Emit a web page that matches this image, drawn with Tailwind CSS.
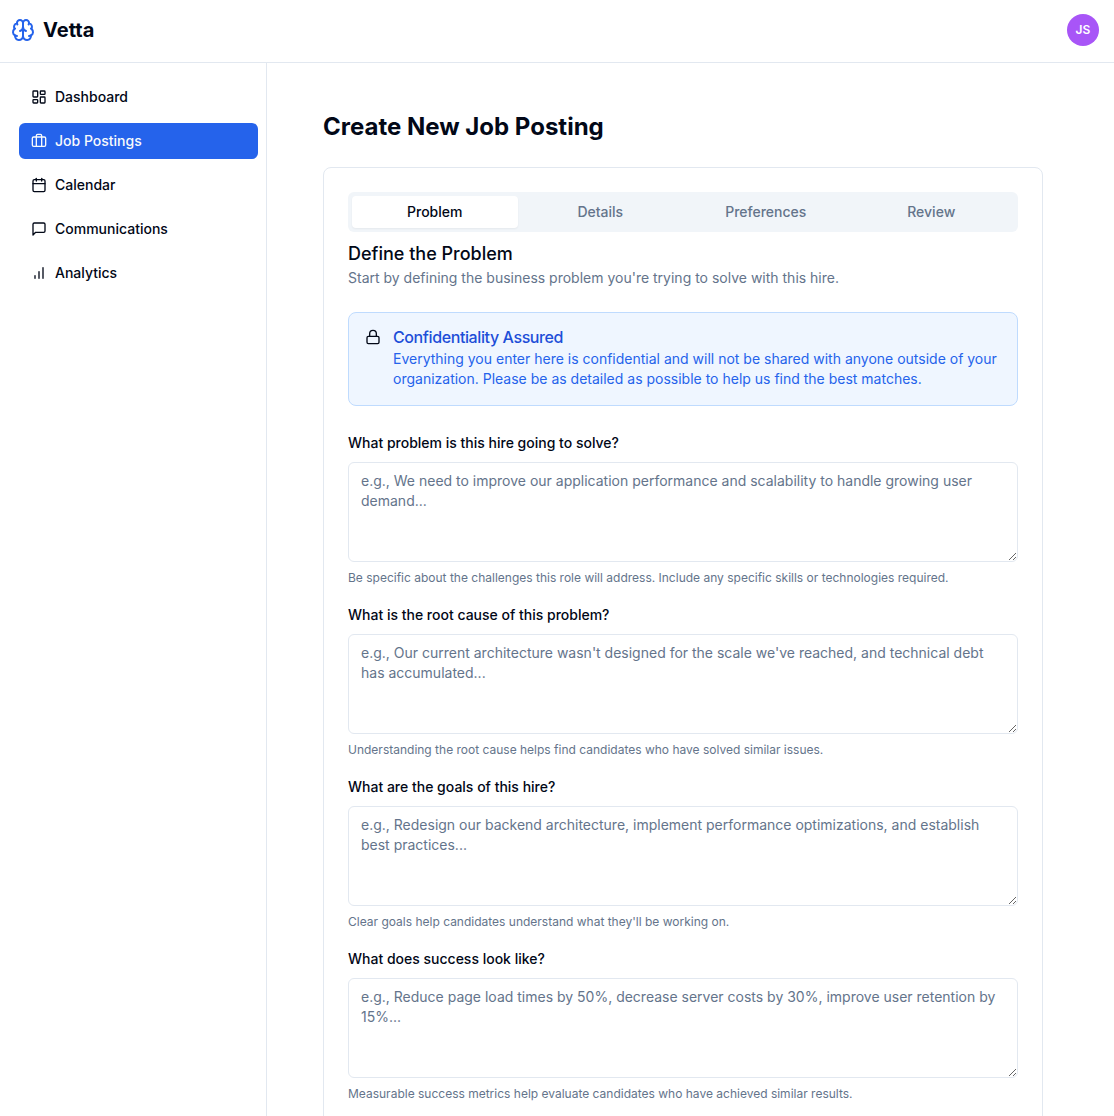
<!DOCTYPE html>
<html lang="en">
<head>
    <meta charset="UTF-8">
    <meta name="viewport" content="width=device-width, initial-scale=1.0">
    <title>Vetta - Create New Job Posting</title>
    <script src="https://cdn.jsdelivr.net/npm/@tailwindcss/browser@4"></script>
</head>
<body class="h-screen overflow-hidden flex flex-col bg-white text-[#020817] font-['Inter',sans-serif] antialiased">
    <!-- Header -->
    <header class="h-[63px] shrink-0 flex items-center justify-between pl-[11px] pr-[15px] pb-0.5 border-b border-[#e2e8f0]">
        <div class="flex items-center gap-2">
            <svg class="size-6 text-[#2563eb]" viewBox="0 0 24 24" fill="none" stroke="currentColor" stroke-width="2" stroke-linecap="round" stroke-linejoin="round">
                <path d="M12 5a3 3 0 1 0-5.997.125 4 4 0 0 0-2.526 5.77 4 4 0 0 0 .556 6.588A4 4 0 1 0 12 18Z"/>
                <path d="M12 5a3 3 0 1 1 5.997.125 4 4 0 0 1 2.526 5.77 4 4 0 0 1-.556 6.588A4 4 0 1 1 12 18Z"/>
                <path d="M15 13a4.5 4.5 0 0 1-3-4 4.5 4.5 0 0 1-3 4"/>
                <path d="M17.599 6.5a3 3 0 0 0 .399-1.375"/>
                <path d="M6.003 5.125A3 3 0 0 0 6.401 6.5"/>
                <path d="M3.477 10.896a4 4 0 0 1 .585-.396"/>
                <path d="M19.938 10.5a4 4 0 0 1 .585.396"/>
                <path d="M6 18a4 4 0 0 1-1.967-.516"/>
                <path d="M19.967 17.484A4 4 0 0 1 18 18"/>
            </svg>
            <span class="text-xl font-bold">Vetta</span>
        </div>
        <div class="size-8 rounded-full bg-[#a855f7] text-white text-xs font-semibold flex items-center justify-center">JS</div>
    </header>

    <div class="flex flex-1 min-h-0">
        <!-- Sidebar -->
        <aside class="w-[267px] shrink-0 border-r border-[#e2e8f0] pt-4 pl-[19px] pr-2">
            <nav class="flex flex-col gap-2 text-sm font-medium">
                <a href="#" class="h-9 px-3 flex items-center gap-2 rounded-md">
                    <svg class="size-4" viewBox="0 0 24 24" fill="none" stroke="currentColor" stroke-width="2" stroke-linecap="round" stroke-linejoin="round">
                        <rect width="7" height="9" x="3" y="3" rx="1"/>
                        <rect width="7" height="5" x="14" y="3" rx="1"/>
                        <rect width="7" height="9" x="14" y="12" rx="1"/>
                        <rect width="7" height="5" x="3" y="16" rx="1"/>
                    </svg>
                    Dashboard
                </a>
                <a href="#" class="h-9 px-3 flex items-center gap-2 rounded-md bg-[#2563eb] text-[#f8fafc]">
                    <svg class="size-4" viewBox="0 0 24 24" fill="none" stroke="currentColor" stroke-width="2" stroke-linecap="round" stroke-linejoin="round">
                        <path d="M16 20V4a2 2 0 0 0-2-2h-4a2 2 0 0 0-2 2v16"/>
                        <rect width="20" height="14" x="2" y="6" rx="2"/>
                    </svg>
                    Job Postings
                </a>
                <a href="#" class="h-9 px-3 flex items-center gap-2 rounded-md">
                    <svg class="size-4" viewBox="0 0 24 24" fill="none" stroke="currentColor" stroke-width="2" stroke-linecap="round" stroke-linejoin="round">
                        <path d="M8 2v4"/>
                        <path d="M16 2v4"/>
                        <rect width="18" height="18" x="3" y="4" rx="2"/>
                        <path d="M3 10h18"/>
                    </svg>
                    Calendar
                </a>
                <a href="#" class="h-9 px-3 flex items-center gap-2 rounded-md">
                    <svg class="size-4" viewBox="0 0 24 24" fill="none" stroke="currentColor" stroke-width="2" stroke-linecap="round" stroke-linejoin="round">
                        <path d="M21 15a2 2 0 0 1-2 2H7l-4 4V5a2 2 0 0 1 2-2h14a2 2 0 0 1 2 2z"/>
                    </svg>
                    Communications
                </a>
                <a href="#" class="h-9 px-3 flex items-center gap-2 rounded-md">
                    <svg class="size-4" viewBox="0 0 24 24" fill="none" stroke="currentColor" stroke-width="2" stroke-linecap="round" stroke-linejoin="round">
                        <line x1="12" x2="12" y1="20" y2="10"/>
                        <line x1="18" x2="18" y1="20" y2="4"/>
                        <line x1="6" x2="6" y1="20" y2="16"/>
                    </svg>
                    Analytics
                </a>
            </nav>
        </aside>

        <!-- Main Content -->
        <main class="flex-1 overflow-hidden pt-12 pl-14 pr-[71px]">
            <h1 class="text-2xl font-bold mb-6">Create New Job Posting</h1>

            <div class="border border-[#e2e8f0] rounded-lg p-6">
                <!-- Tabs -->
                <div class="h-10 p-1 grid grid-cols-4 rounded-md bg-[#f1f5f9] text-[#64748b] text-sm font-medium">
                    <button class="rounded-sm bg-white text-[#020817] shadow-xs">Problem</button>
                    <button>Details</button>
                    <button>Preferences</button>
                    <button>Review</button>
                </div>

                <div class="mt-2 mb-6">
                    <h2 class="text-lg font-medium">Define the Problem</h2>
                    <p class="text-sm text-[#64748b]">Start by defining the business problem you're trying to solve with this hire.</p>
                </div>

                <!-- Confidentiality notice -->
                <div class="flex gap-3 p-4 mb-6 border border-[#bfdbfe] rounded-lg bg-[#eff6ff]">
                    <svg class="size-4 shrink-0" viewBox="0 0 24 24" fill="none" stroke="currentColor" stroke-width="2" stroke-linecap="round" stroke-linejoin="round">
                        <rect width="18" height="11" x="3" y="11" rx="2"/>
                        <path d="M7 11V7a5 5 0 0 1 10 0v4"/>
                    </svg>
                    <div>
                        <h5 class="mb-1 font-medium leading-none tracking-tight text-[#1d4ed8]">Confidentiality Assured</h5>
                        <p class="text-sm text-[#2563eb]">Everything you enter here is confidential and will not be shared with anyone outside of your organization. Please be as detailed as possible to help us find the best matches.</p>
                    </div>
                </div>

                <!-- Questions -->
                <form class="flex flex-col gap-4">
                    <div class="flex flex-col gap-2">
                        <label for="problem" class="h-6 pt-0.5 text-sm leading-[22px] font-medium">What problem is this hire going to solve?</label>
                        <textarea id="problem" class="h-[100px] px-3 py-2 border border-[#e2e8f0] rounded-md text-sm placeholder:text-[#64748b]" placeholder="e.g., We need to improve our application performance and scalability to handle growing user demand..."></textarea>
                        <p class="text-xs text-[#64748b]">Be specific about the challenges this role will address. Include any specific skills or technologies required.</p>
                    </div>
                    <div class="flex flex-col gap-2">
                        <label for="cause" class="h-6 pt-0.5 text-sm leading-[22px] font-medium">What is the root cause of this problem?</label>
                        <textarea id="cause" class="h-[100px] px-3 py-2 border border-[#e2e8f0] rounded-md text-sm placeholder:text-[#64748b]" placeholder="e.g., Our current architecture wasn't designed for the scale we've reached, and technical debt has accumulated..."></textarea>
                        <p class="text-xs text-[#64748b]">Understanding the root cause helps find candidates who have solved similar issues.</p>
                    </div>
                    <div class="flex flex-col gap-2">
                        <label for="goals" class="h-6 pt-0.5 text-sm leading-[22px] font-medium">What are the goals of this hire?</label>
                        <textarea id="goals" class="h-[100px] px-3 py-2 border border-[#e2e8f0] rounded-md text-sm placeholder:text-[#64748b]" placeholder="e.g., Redesign our backend architecture, implement performance optimizations, and establish best practices..."></textarea>
                        <p class="text-xs text-[#64748b]">Clear goals help candidates understand what they'll be working on.</p>
                    </div>
                    <div class="flex flex-col gap-2">
                        <label for="success" class="h-6 pt-0.5 text-sm leading-[22px] font-medium">What does success look like?</label>
                        <textarea id="success" class="h-[100px] px-3 py-2 border border-[#e2e8f0] rounded-md text-sm placeholder:text-[#64748b]" placeholder="e.g., Reduce page load times by 50%, decrease server costs by 30%, improve user retention by 15%..."></textarea>
                        <p class="text-xs text-[#64748b]">Measurable success metrics help evaluate candidates who have achieved similar results.</p>
                    </div>
                </form>
            </div>
        </main>
    </div>
</body>
</html>
